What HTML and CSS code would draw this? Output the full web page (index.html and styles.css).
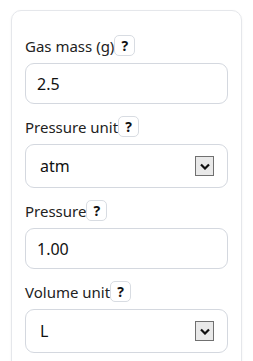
FILE: index.html
```html
<!DOCTYPE html>
<html lang="en">

<head>
    <meta charset="UTF-8" />
    <meta name="viewport" content="width=device-width, initial-scale=1.0" />
    <title>Gas Calculator</title>
    <link rel="stylesheet" href="styles.css">
</head>

<body>
    <div class="card">
        <div class="field">
            <div class="field-label">Gas mass (g)<span class="help">?</span></div>
            <div class="input">2.5</div>
        </div>
        <div class="field">
            <div class="field-label">Pressure unit<span class="help">?</span></div>
            <div class="input select">
                <span>atm</span>
                <span class="arrow">
                    <svg width="10" height="7" viewBox="0 0 10 7"><path d="M1 1.5 L5 5.5 L9 1.5" fill="none" stroke="#111" stroke-width="2.2"/></svg>
                </span>
            </div>
        </div>
        <div class="field">
            <div class="field-label">Pressure<span class="help">?</span></div>
            <div class="input">1.00</div>
        </div>
        <div class="field">
            <div class="field-label">Volume unit<span class="help">?</span></div>
            <div class="input select">
                <span>L</span>
                <span class="arrow">
                    <svg width="10" height="7" viewBox="0 0 10 7"><path d="M1 1.5 L5 5.5 L9 1.5" fill="none" stroke="#111" stroke-width="2.2"/></svg>
                </span>
            </div>
        </div>
    </div>
</body>

</html>
```

FILE: styles.css
```css
body {
    margin: 0;
    padding: 10px 11px;
    font-family: 'Segoe UI', 'Noto Sans', sans-serif;
    color: #222;
    background: white;
}

.card {
    border: 1px solid #e5e7eb;
    border-radius: 10px;
    padding: 24px 13px 12px;
    box-shadow: 0 1px 3px rgba(0, 0, 0, 0.05);
}

.field {
    margin-bottom: 12px;
}

.field-label {
    display: flex;
    align-items: center;
    height: 21px;
    font-size: 15px;
    margin-bottom: 7px;
}

.help {
    display: inline-flex;
    align-items: center;
    justify-content: center;
    width: 19px;
    height: 19px;
    border: 1px solid #d8dce2;
    border-radius: 5px;
    font-size: 14px;
    font-weight: bold;
    color: #111;
}

.input {
    display: flex;
    align-items: center;
    height: 39px;
    padding: 0 11px;
    border: 1px solid #d4d8df;
    border-radius: 9px;
    font-size: 16px;
    color: #111;
}

.select {
    height: 42px;
    justify-content: space-between;
    padding: 0 13px 0 14px;
}

.arrow {
    display: flex;
    align-items: center;
    justify-content: center;
    width: 17px;
    height: 18px;
    background: #e9e9e9;
    border: 1px solid #707070;
}
```
